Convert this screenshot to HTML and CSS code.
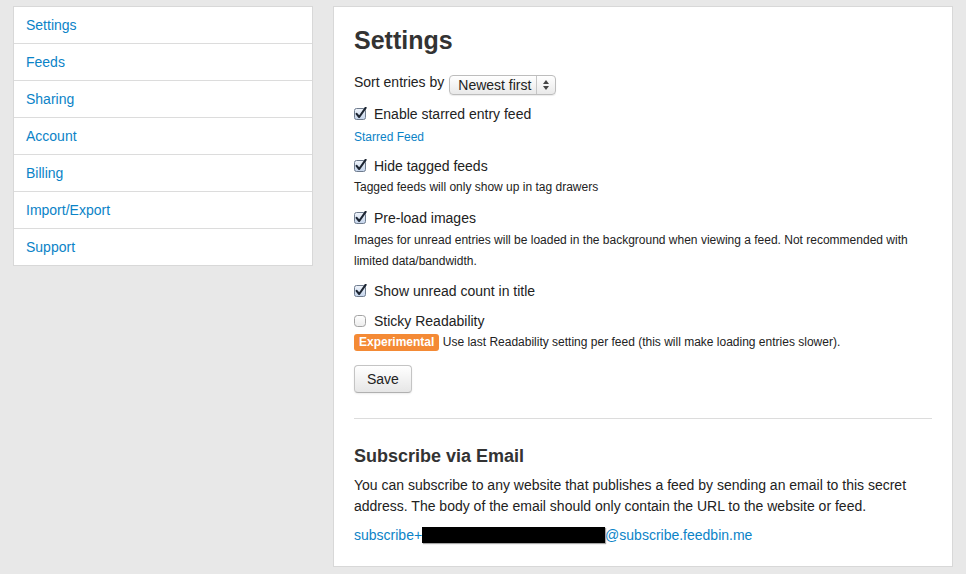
FILE: index.html
```html
<!DOCTYPE html>
<html>
<head>
<meta charset="utf-8">
<title>Settings</title>
<link rel="stylesheet" href="styles.css">
</head>
<body>
<div class="layout">
  <nav class="sidebar">
    <a class="nav-item" href="#">Settings</a>
    <a class="nav-item" href="#">Feeds</a>
    <a class="nav-item" href="#">Sharing</a>
    <a class="nav-item" href="#">Account</a>
    <a class="nav-item" href="#">Billing</a>
    <a class="nav-item" href="#">Import/Export</a>
    <a class="nav-item" href="#">Support</a>
  </nav>
  <main class="card">
    <h1 class="title">Settings</h1>
    <div class="sort-row">
      <span class="sort-label">Sort entries by</span>
      <span class="select">
        <span class="select-text">Newest first</span>
        <span class="select-arrows">
          <svg width="8" height="12" viewBox="0 0 8 12"><path d="M4 1 L7 5 L1 5 Z" fill="#444"/><path d="M4 11 L7 7 L1 7 Z" fill="#444"/></svg>
        </span>
      </span>
    </div>

    <div class="option opt-1">
      <span class="cb"><svg width="13" height="13" viewBox="0 0 13 13"><defs><linearGradient id="g1" x1="0" y1="0" x2="0" y2="1"><stop offset="0" stop-color="#f1f5fb"/><stop offset="1" stop-color="#c3d3ea"/></linearGradient></defs><rect x="0.5" y="1.5" width="11" height="11" rx="2" fill="url(#g1)" stroke="#6f7c8e"/><path d="M2.6 6.8 L5.2 10 L11.6 0.8" fill="none" stroke="#1d2633" stroke-width="2.1" stroke-linecap="round" stroke-linejoin="round"/></svg></span>
      <span class="label">Enable starred entry feed</span>
    </div>
    <div class="help help-link"><a href="#">Starred Feed</a></div>

    <div class="option opt-2">
      <span class="cb"><svg width="13" height="13" viewBox="0 0 13 13"><defs><linearGradient id="g2" x1="0" y1="0" x2="0" y2="1"><stop offset="0" stop-color="#f1f5fb"/><stop offset="1" stop-color="#c3d3ea"/></linearGradient></defs><rect x="0.5" y="1.5" width="11" height="11" rx="2" fill="url(#g2)" stroke="#6f7c8e"/><path d="M2.6 6.8 L5.2 10 L11.6 0.8" fill="none" stroke="#1d2633" stroke-width="2.1" stroke-linecap="round" stroke-linejoin="round"/></svg></span>
      <span class="label">Hide tagged feeds</span>
    </div>
    <div class="help help-1">Tagged feeds will only show up in tag drawers</div>

    <div class="option opt-3">
      <span class="cb"><svg width="13" height="13" viewBox="0 0 13 13"><defs><linearGradient id="g3" x1="0" y1="0" x2="0" y2="1"><stop offset="0" stop-color="#f1f5fb"/><stop offset="1" stop-color="#c3d3ea"/></linearGradient></defs><rect x="0.5" y="1.5" width="11" height="11" rx="2" fill="url(#g3)" stroke="#6f7c8e"/><path d="M2.6 6.8 L5.2 10 L11.6 0.8" fill="none" stroke="#1d2633" stroke-width="2.1" stroke-linecap="round" stroke-linejoin="round"/></svg></span>
      <span class="label">Pre-load images</span>
    </div>
    <div class="help help-2">Images for unread entries will be loaded in the background when viewing a feed. Not recommended with limited data/bandwidth.</div>

    <div class="option opt-4">
      <span class="cb"><svg width="13" height="13" viewBox="0 0 13 13"><defs><linearGradient id="g4" x1="0" y1="0" x2="0" y2="1"><stop offset="0" stop-color="#f1f5fb"/><stop offset="1" stop-color="#c3d3ea"/></linearGradient></defs><rect x="0.5" y="1.5" width="11" height="11" rx="2" fill="url(#g4)" stroke="#6f7c8e"/><path d="M2.6 6.8 L5.2 10 L11.6 0.8" fill="none" stroke="#1d2633" stroke-width="2.1" stroke-linecap="round" stroke-linejoin="round"/></svg></span>
      <span class="label">Show unread count in title</span>
    </div>

    <div class="option opt-5">
      <span class="cb"><svg width="13" height="13" viewBox="0 0 13 13"><defs><linearGradient id="g5" x1="0" y1="0" x2="0" y2="1"><stop offset="0" stop-color="#ffffff"/><stop offset="1" stop-color="#ececec"/></linearGradient></defs><rect x="0.5" y="1.5" width="11" height="11" rx="3" fill="url(#g5)" stroke="#a3a3a3"/></svg></span>
      <span class="label">Sticky Readability</span>
    </div>
    <div class="help help-3"><span class="badge">Experimental</span> Use last Readability setting per feed (this will make loading entries slower).</div>

    <button class="btn" type="button">Save</button>

    <hr class="divider">

    <h2 class="subtitle">Subscribe via Email</h2>
    <p class="para">You can subscribe to any website that publishes a feed by sending an email to this secret address. The body of the email should only contain the URL to the website or feed.</p>
    <div class="email"><a href="#">subscribe+<span class="redact"></span>@subscribe.feedbin.me</a></div>
  </main>
</div>
</body>
</html>
```
FILE: styles.css
```css
* { box-sizing: border-box; }
html, body { margin: 0; padding: 0; }
body {
  background: #e8e8e8;
  font-family: "Liberation Sans", Arial, Helvetica, sans-serif;
  color: #333;
  font-size: 14px;
}
a { color: #0b83c7; text-decoration: none; }

.layout {
  display: flex;
  align-items: flex-start;
  gap: 20px;
  padding: 6px 13px;
}

.sidebar {
  width: 300px;
  flex: none;
  background: #fff;
  border: 1px solid #d8d8d8;
  display: flex;
  flex-direction: column;
}
.nav-item {
  height: 37px;
  line-height: 36px;
  padding: 0 12px;
  border-bottom: 1px solid #dcdcdc;
  font-size: 14px;
}
.nav-item:last-child { border-bottom: 0; height: 36px; }

.card {
  width: 620px;
  flex: none;
  background: #fff;
  border: 1px solid #d8d8d8;
  padding: 18px 20px 20px;
}

.title {
  margin: 0;
  font-size: 25px;
  line-height: 30px;
  font-weight: bold;
  color: #333;
}

.sort-row {
  display: flex;
  align-items: flex-start;
  margin-top: 17px;
  height: 23px;
}
.sort-label { line-height: 20px; margin-right: 5px; color: #222; }
.select {
  margin-top: 3px;
  display: flex;
  align-items: stretch;
  width: 107px;
  height: 20px;
  border: 1px solid #bdbdbd;
  border-radius: 4px;
  background: linear-gradient(#ffffff, #e9e9e9);
  box-shadow: 0 1px 1px rgba(0,0,0,0.08);
}
.select-text {
  flex: 1;
  padding-left: 8px;
  line-height: 19px;
  font-size: 14px;
  color: #222;
}
.select-arrows {
  width: 19px;
  border-left: 1px solid #c6c6c6;
  display: flex;
  align-items: center;
  justify-content: center;
}

.option {
  display: flex;
  align-items: flex-start;
}
.cb { width: 13px; height: 13px; margin-top: 3px; margin-right: 7px; flex: none; }
.cb svg { display: block; }
.label { line-height: 20px; color: #222; }
.opt-1 { margin-top: 9px; }
.opt-2 { margin-top: 8px; }
.opt-3 { margin-top: 10px; }
.opt-4 { margin-top: 9px; }
.opt-5 { margin-top: 10px; }

.help {
  font-size: 12px;
  line-height: 21px;
  color: #222;
}
.help-link { margin-top: 3px; }
.help-1 { margin-top: 1px; }
.help-2 { margin-top: 2px; }
.help-3 { margin-top: 1px; }

.badge {
  display: inline-block;
  height: 17px;
  line-height: 17px;
  padding: 0 5px;
  border-radius: 3px;
  background: #f48a35;
  color: #fff;
  font-weight: bold;
  font-size: 12px;
}

.btn {
  display: block;
  margin-top: 12px;
  height: 28px;
  padding: 0 12px;
  border: 1px solid #c4c4c4;
  border-bottom-color: #b0b0b0;
  border-radius: 4px;
  background: linear-gradient(#ffffff, #e6e6e6);
  font-family: "Liberation Sans", Arial, sans-serif;
  font-size: 14px;
  line-height: 26px;
  color: #222;
  box-shadow: 0 1px 2px rgba(0,0,0,0.08);
}

.divider {
  margin: 25px 0 0;
  border: 0;
  border-top: 1px solid #dcdcdc;
  height: 0;
}

.subtitle {
  margin: 25px 0 0;
  font-size: 18px;
  line-height: 24px;
  font-weight: bold;
  color: #333;
}

.para {
  margin: 7px 0 0;
  line-height: 21px;
  color: #222;
}

.email {
  margin-top: 8px;
  line-height: 21px;
}
.redact {
  display: inline-block;
  width: 183px;
  height: 16px;
  background: #000;
  vertical-align: -3px;
  box-shadow: 1px 1px 1px rgba(0,0,0,0.35);
}
```
